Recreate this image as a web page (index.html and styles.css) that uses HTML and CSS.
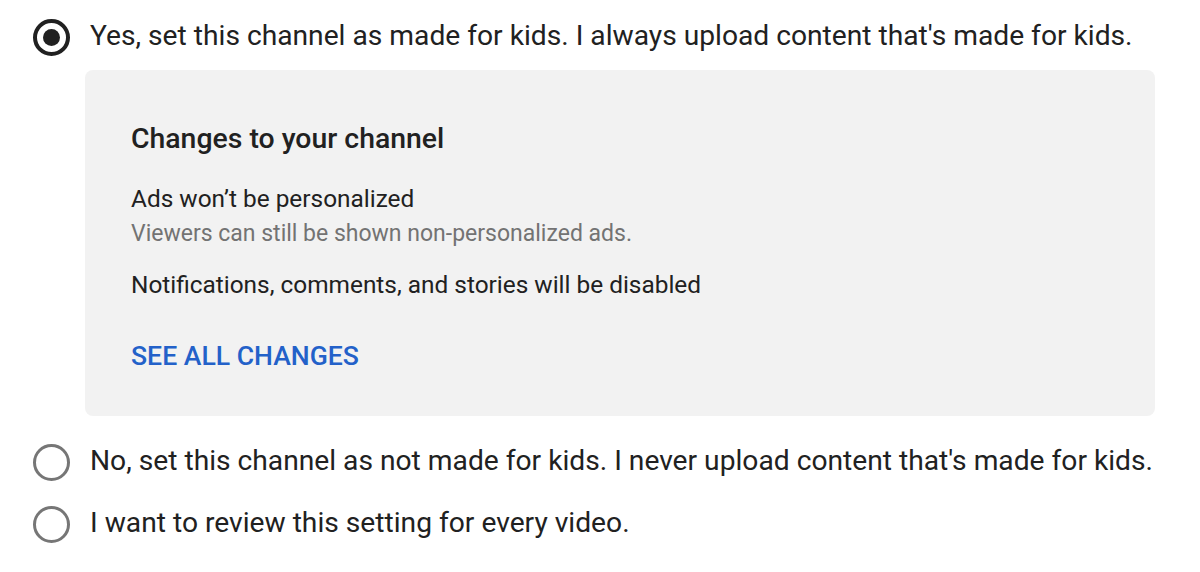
FILE: index.html
```html
<!DOCTYPE html>
<html lang="en">
<head>
  <meta charset="UTF-8" />
  <title>Audience</title>
  <link rel="stylesheet" href="styles.css">
</head>
<body>
  <div class="options">
    <label class="option">
      <span class="radio checked"></span>
      <span class="option-text">Yes, set this channel as made for kids. I always upload content that's made for kids.</span>
    </label>

    <div class="changes">
      <h3>Changes to your channel</h3>
      <div class="change-item">
        <p class="change-title">Ads won’t be personalized</p>
        <p class="change-sub">Viewers can still be shown non-personalized ads.</p>
      </div>
      <div class="change-item">
        <p class="change-title">Notifications, comments, and stories will be disabled</p>
      </div>
      <a href="#" class="see-all">SEE ALL CHANGES</a>
    </div>

    <label class="option">
      <span class="radio"></span>
      <span class="option-text">No, set this channel as not made for kids. I never upload content that's made for kids.</span>
    </label>

    <label class="option">
      <span class="radio"></span>
      <span class="option-text">I want to review this setting for every video.</span>
    </label>
  </div>
</body>
</html>
```

FILE: styles.css
```css
* {
  box-sizing: border-box;
  margin: 0;
  padding: 0;
}

body {
  font-family: Roboto, 'Liberation Sans', sans-serif;
  background: #fff;
  color: #212121;
}

.options {
  padding: 18px 0 0 33px;
}

.option {
  display: flex;
  align-items: center;
  gap: 20px;
  height: 38px;
}

.radio {
  width: 37px;
  height: 37px;
  border-radius: 50%;
  border: 3.5px solid #767676;
  flex-shrink: 0;
  display: flex;
  align-items: center;
  justify-content: center;
}

.radio.checked {
  border: 4px solid #212121;
}

.radio.checked::after {
  content: '';
  width: 17px;
  height: 17px;
  border-radius: 50%;
  background: #212121;
}

.option-text {
  font-size: 28.2px;
  line-height: 34px;
  padding-bottom: 2px;
}

/* grey panel under the selected option */
.changes {
  margin: 14px 45px 0 52px;
  background: #f2f2f2;
  border-radius: 8px;
  padding: 53px 46px 0;
  height: 346px;
}

.changes h3 {
  font-size: 28.4px;
  line-height: 32px;
  font-weight: 500;
  margin-bottom: 30px;
}

.change-item {
  margin-bottom: 24px;
}

.change-title {
  font-size: 24.4px;
  line-height: 28px;
}

.change-sub {
  font-size: 23px;
  line-height: 26px;
  color: #737373;
  margin-top: 8px;
}

.see-all {
  display: inline-block;
  margin-top: 18px;
  font-size: 26.6px;
  line-height: 30px;
  font-weight: 500;
  color: #2361c9;
  text-decoration: none;
}

.changes + .option {
  margin-top: 27px;
}

.option + .option {
  margin-top: 24px;
}
```
